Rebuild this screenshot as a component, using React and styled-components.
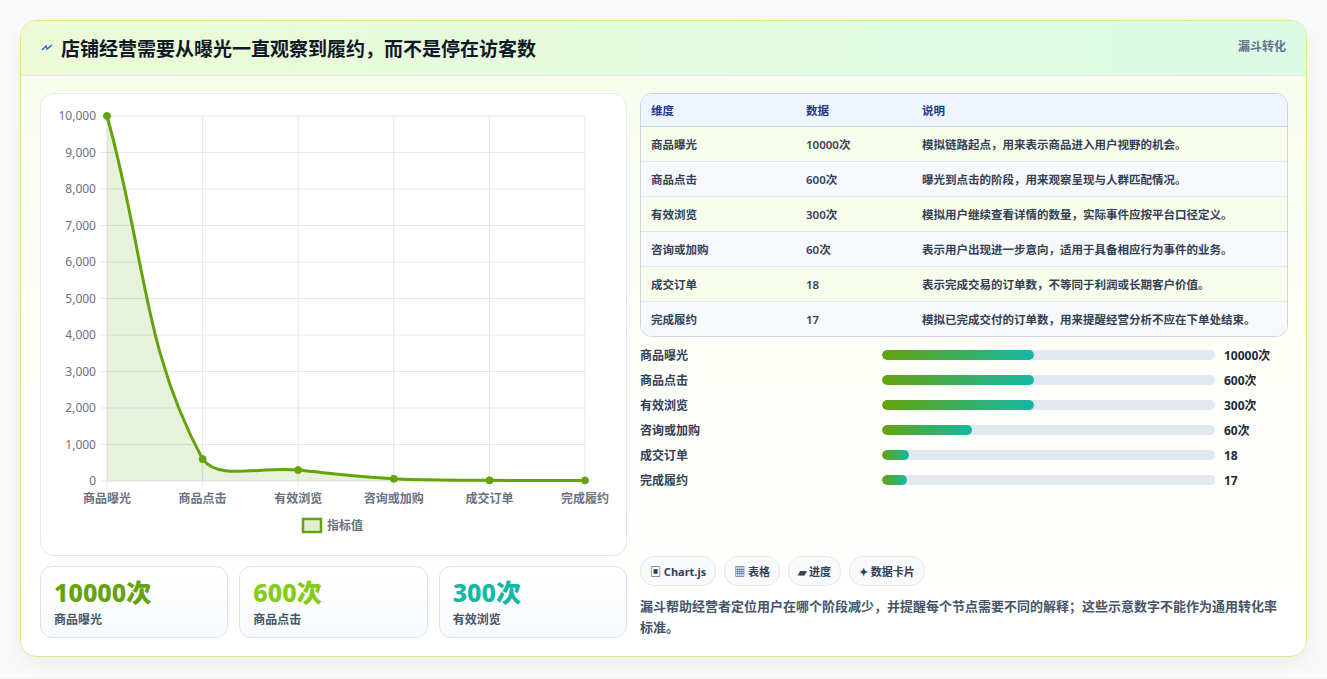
import styled, { createGlobalStyle } from "styled-components"

const Global = createGlobalStyle`
  body { margin:0; background:#f3f4f6; font-family:"Noto Sans","Noto Sans CJK SC",sans-serif; }
`
const Page = styled.div`
  padding:20px 20px 21px 20px;
  background:#fafafa;
`
const Card = styled.div`
  border:1px solid #d3f08f;
  border-radius:16px;
  overflow:hidden;
  background:linear-gradient(180deg,#f8fdec 0%,#fdfff8 50%,#ffffff 100%);
  box-shadow:0 8px 24px rgba(0,0,0,0.06);
`
const Header = styled.div`
  height:54px;
  display:flex;
  align-items:center;
  justify-content:space-between;
  padding:0 20px;
  background:linear-gradient(90deg,#ecfbd6,#dbfbe6);
  border-bottom:1px solid #dfe7ee;
`
const Title = styled.h1`
  margin:0;
  font-size:19px;
  font-weight:700;
  color:#111827;
  display:flex;
  align-items:center;
  gap:8px;
`
const Tag = styled.span`
  font-size:12px;
  font-weight:700;
  color:#64748b;
  align-self:flex-start;
  margin-top:16px;
`
const Body = styled.div`
  display:grid;
  grid-template-columns:587px 1fr;
  gap:13px;
  padding:17px 18px 18px 19px;
`
const Col = styled.div`
  display:flex;
  flex-direction:column;
`
const ChartBox = styled.div`
  height:461px;
  border:1px solid #e2e8f0;
  border-radius:14px;
  background:#fff;
`
const Stats = styled.div`
  display:grid;
  grid-template-columns:repeat(3,1fr);
  gap:11px;
  margin-top:10px;
`
const Stat = styled.div`
  height:72px;
  border:1px solid #dbe5f2;
  border-radius:12px;
  background:linear-gradient(180deg,#fff,#f8fafc);
  padding:9px 13px;
  box-sizing:border-box;
`
const StatNum = styled.div`
  font-size:25px;
  font-weight:800;
  color:${p => p.color};
  line-height:32px;
`
const StatLabel = styled.div`
  font-size:12px;
  font-weight:600;
  color:#475569;
  margin-top:2px;
`
const Table = styled.table`
  width:100%;
  border-collapse:separate;
  border-spacing:0;
  border:1px solid #cbd5e1;
  border-radius:12px;
  overflow:hidden;
  font-size:11.5px;
  font-weight:600;
  color:#334155;
`
const Th = styled.th`
  text-align:left;
  background:#eef5ff;
  color:#1e3a8a;
  height:32px;
  padding:0 10px;
  font-weight:700;
  border-bottom:1px solid #cbd5e1;
`
const Td = styled.td`
  height:34px;
  padding:0 10px;
  background:${p => (p.alt ? "#f7f9fc" : "#f9fdec")};
  border-top:${p => (p.first ? "none" : "1px solid #e2e8f0")};
`
const Bars = styled.div`
  display:flex;
  flex-direction:column;
  gap:9px;
  margin-top:9px;
`
const BarRow = styled.div`
  display:grid;
  grid-template-columns:242px 333px 1fr;
  align-items:center;
  font-size:12px;
  font-weight:600;
  color:#334155;
  height:16px;
`
const Track = styled.div`
  height:10px;
  border-radius:5px;
  background:#e2e8f0;
  overflow:hidden;
`
const Fill = styled.div`
  height:100%;
  border-radius:5px;
  background:linear-gradient(90deg,#65a30d,#14b8a6);
`
const Val = styled.span`
  font-weight:700;
  color:#1e293b;
  padding-left:9px;
`
const Chips = styled.div`
  display:flex;
  gap:8px;
  margin-top:auto;
`
const Chip = styled.span`
  height:28px;
  padding:0 9px;
  border:1px solid #e2e8f0;
  border-radius:14px;
  background:#f8fafc;
  font-size:11px;
  font-weight:700;
  color:#334155;
  display:flex;
  align-items:center;
  gap:4px;
`
const Note = styled.p`
  margin:10px 0 0 0;
  font-size:13px;
  font-weight:600;
  line-height:21px;
  color:#475569;
`

const labels = ["商品曝光","商品点击","有效浏览","咨询或加购","成交订单","完成履约"]
const values = [10000,600,300,60,18,17]
const notes = [
  "模拟链路起点，用来表示商品进入用户视野的机会。",
  "曝光到点击的阶段，用来观察呈现与人群匹配情况。",
  "模拟用户继续查看详情的数量，实际事件应按平台口径定义。",
  "表示用户出现进一步意向，适用于具备相应行为事件的业务。",
  "表示完成交易的订单数，不等同于利润或长期客户价值。",
  "模拟已完成交付的订单数，用来提醒经营分析不应在下单处结束。",
]
const units = ["次","次","次","次","",""]
const widths = [45.5,45.5,45.5,27,8,7.5]

const X0 = 66, X1 = 544, Y0 = 22, Y1 = 387
const pts = values.map((v, i) => [X0 + i * (X1 - X0) / 5, Y1 - v / 10000 * (Y1 - Y0)])

function curve() {
  const t = 0.4
  const cps = pts.map((p, i) => {
    const prev = pts[i - 1] || p, next = pts[i + 1] || p
    const d01 = Math.hypot(p[0] - prev[0], p[1] - prev[1])
    const d12 = Math.hypot(next[0] - p[0], next[1] - p[1])
    const s = d01 + d12 || 1
    const fa = t * d01 / s, fb = t * d12 / s
    return [
      [p[0] - fa * (next[0] - prev[0]), p[1] - fa * (next[1] - prev[1])],
      [p[0] + fb * (next[0] - prev[0]), p[1] + fb * (next[1] - prev[1])],
    ]
  })
  let d = `M${pts[0][0]},${pts[0][1]}`
  for (let i = 1; i < pts.length; i++) {
    const a = cps[i - 1][1], b = cps[i][0]
    d += ` C${a[0]},${Math.min(a[1], Y1)} ${b[0]},${Math.min(b[1], Y1)} ${pts[i][0]},${pts[i][1]}`
  }
  return d
}

const Chart = () => {
  const d = curve()
  const grid = "#e5e7eb"
  return (
    <svg width="586" height="461" fontFamily="'Noto Sans','Noto Sans CJK SC',sans-serif">
      {Array.from({ length: 11 }, (_, i) => {
        const y = Y0 + i * (Y1 - Y0) / 10
        return (
          <g key={i}>
            <line x1={X0 - 6} x2={X1} y1={y} y2={y} stroke={grid} />
            <text x={X0 - 11} y={y + 4} fontSize="12" fill="#6b7280" textAnchor="end">
              {(10000 - i * 1000).toLocaleString("en-US")}
            </text>
          </g>
        )
      })}
      {pts.map((p, i) => (
        <g key={i}>
          <line x1={p[0]} x2={p[0]} y1={Y0} y2={Y1 + 6} stroke={grid} />
          <text x={p[0]} y={409} fontSize="12" fontWeight="600" fill="#6b7280" textAnchor="middle">{labels[i]}</text>
        </g>
      ))}
      <path d={`${d} L${X1},${Y1} L${X0},${Y1} Z`} fill="rgba(101,163,13,0.15)" />
      <path d={d} fill="none" stroke="#65a30d" strokeWidth="3" />
      {pts.map((p, i) => <circle key={i} cx={p[0]} cy={p[1]} r="3.5" fill="#65a30d" stroke="#65a30d" />)}
      <rect x="262" y="425" width="18" height="13" fill="#e3efd2" stroke="#65a30d" strokeWidth="2.5" />
      <text x="286" y="436" fontSize="12" fontWeight="600" fill="#6b7280">指标值</text>
    </svg>
  )
}

export default function App() {
  return (
    <Page>
      <Global />
      <Card>
        <Header>
          <Title>
            <svg width="12" height="12" viewBox="0 0 12 12"><path d="M1 8 L5 4 L6 7 L11 3" stroke="#2563eb" strokeWidth="1.4" fill="none" /></svg>
            店铺经营需要从曝光一直观察到履约，而不是停在访客数
          </Title>
          <Tag>漏斗转化</Tag>
        </Header>
        <Body>
          <Col>
            <ChartBox><Chart /></ChartBox>
            <Stats>
              <Stat><StatNum color="#65a30d">10000次</StatNum><StatLabel>商品曝光</StatLabel></Stat>
              <Stat><StatNum color="#84cc16">600次</StatNum><StatLabel>商品点击</StatLabel></Stat>
              <Stat><StatNum color="#14b8a6">300次</StatNum><StatLabel>有效浏览</StatLabel></Stat>
            </Stats>
          </Col>
          <Col>
            <Table>
              <thead>
                <tr><Th style={{ width: 135 }}>维度</Th><Th style={{ width: 96 }}>数据</Th><Th>说明</Th></tr>
              </thead>
              <tbody>
                {labels.map((l, i) => (
                  <tr key={l}>
                    <Td alt={i % 2} first={i === 0}>{l}</Td>
                    <Td alt={i % 2} first={i === 0}>{values[i]}{units[i]}</Td>
                    <Td alt={i % 2} first={i === 0}>{notes[i]}</Td>
                  </tr>
                ))}
              </tbody>
            </Table>
            <Bars>
              {labels.map((l, i) => (
                <BarRow key={l}>
                  <span>{l}</span>
                  <Track><Fill style={{ width: `${widths[i]}%` }} /></Track>
                  <Val>{values[i]}{units[i]}</Val>
                </BarRow>
              ))}
            </Bars>
            <Chips>
              <Chip>▣ Chart.js</Chip>
              <Chip>▦ 表格</Chip>
              <Chip>▰ 进度</Chip>
              <Chip>✦ 数据卡片</Chip>
            </Chips>
            <Note>漏斗帮助经营者定位用户在哪个阶段减少，并提醒每个节点需要不同的解释；这些示意数字不能作为通用转化率标准。</Note>
          </Col>
        </Body>
      </Card>
    </Page>
  )
}
